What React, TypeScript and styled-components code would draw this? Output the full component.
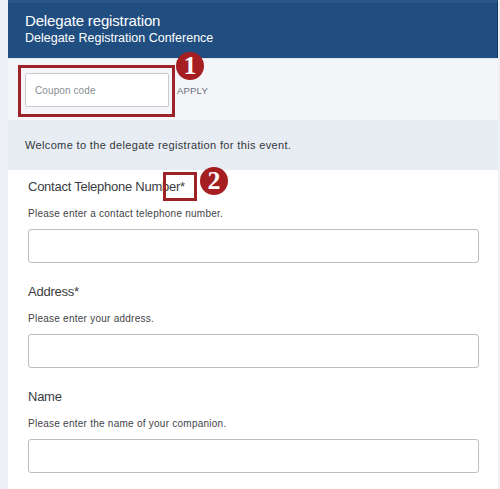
import styled, { createGlobalStyle } from "styled-components";

const GlobalStyle = createGlobalStyle`
  html, body {
    margin: 0;
    padding: 0;
    background: #eef0f5;
  }
  * {
    box-sizing: border-box;
  }
`;

const Page = styled.div`
  position: relative;
  width: 500px;
  height: 489px;
  overflow: hidden;
  padding-left: 8px;
  padding-right: 2px;
  font-family: "Liberation Sans", Arial, sans-serif;
`;

const Card = styled.div`
  background: #ffffff;
  height: 100%;
  display: flex;
  flex-direction: column;
`;

const Header = styled.header`
  height: 58px;
  background: #214e80;
  border-top: 3px solid #2b5788;
  border-right: 1px solid #183a60;
  color: #ffffff;
  padding: 8px 17px 0;
  display: flex;
  flex-direction: column;
`;

const Title = styled.h1`
  margin: 0;
  font-size: 15px;
  font-weight: 400;
  letter-spacing: -0.15px;
  line-height: 19px;
`;

const Subtitle = styled.div`
  font-size: 12.5px;
  line-height: 16px;
`;

const CouponBar = styled.div`
  height: 62px;
  background: #f4f5f9;
  border-top: 1px solid #dde3ec;
  padding: 14px 17px 0;
  display: flex;
  align-items: flex-start;
  gap: 8px;
`;

const CouponInput = styled.input`
  width: 144px;
  height: 34px;
  border: 1px solid #c9cbcf;
  border-radius: 2px;
  background: #ffffff;
  padding: 0 9px;
  font-family: inherit;
  font-size: 10px;
  letter-spacing: 0.1px;
  color: #333;

  &::placeholder {
    color: #8a8d92;
  }
`;

const ApplyButton = styled.button`
  border: none;
  background: transparent;
  padding: 0;
  height: 34px;
  font-family: inherit;
  font-size: 9.5px;
  letter-spacing: 0.2px;
  color: #6b7079;
  cursor: pointer;
`;

const WelcomeBand = styled.div`
  height: 50px;
  background: #e8ecf3;
  padding: 0 17px;
  display: flex;
  align-items: center;
  font-size: 11px;
  letter-spacing: 0.35px;
  color: #33373d;
`;

const Form = styled.form`
  padding: 7px 20px 0;
  display: flex;
  flex-direction: column;
  gap: 19px;
`;

const Field = styled.div`
  display: flex;
  flex-direction: column;
`;

const Label = styled.label`
  font-size: 13px;
  letter-spacing: -0.25px;
  line-height: 20px;
  color: #3a3d42;
`;

const Help = styled.div`
  margin-top: 9px;
  font-size: 10px;
  line-height: 16px;
  letter-spacing: 0.25px;
  color: #3f4348;
`;

const TextInput = styled.input`
  margin-top: 7px;
  width: 451px;
  height: 34px;
  border: 1px solid #bcbec2;
  border-radius: 3px;
  background: #ffffff;
  font-family: inherit;
  font-size: 13px;
  padding: 0 8px;
`;

const Marker = styled.div<{ $x: number; $y: number; $w: number; $h: number }>`
  position: absolute;
  left: ${(p) => p.$x}px;
  top: ${(p) => p.$y}px;
  width: ${(p) => p.$w}px;
  height: ${(p) => p.$h}px;
  border: 3px solid #9c2426;
  pointer-events: none;
`;

const Badge = styled.div<{ $x: number; $y: number }>`
  position: absolute;
  left: ${(p) => p.$x}px;
  top: ${(p) => p.$y}px;
  width: 28px;
  height: 28px;
  border-radius: 50%;
  background: #a51e22;
  color: #ffffff;
  font-family: "Liberation Serif", "Times New Roman", serif;
  font-weight: 700;
  font-size: 26px;
  line-height: 28px;
  text-align: center;
  pointer-events: none;
`;

const fields = [
  {
    id: "phone",
    label: "Contact Telephone Number*",
    help: "Please enter a contact telephone number.",
  },
  { id: "address", label: "Address*", help: "Please enter your address." },
  {
    id: "companion",
    label: "Name",
    help: "Please enter the name of your companion.",
  },
];

export default function App() {
  return (
    <>
      <GlobalStyle />
      <Page>
        <Card>
          <Header>
            <Title>Delegate registration</Title>
            <Subtitle>Delegate Registration Conference</Subtitle>
          </Header>

          <CouponBar>
            <CouponInput placeholder="Coupon code" />
            <ApplyButton type="button">APPLY</ApplyButton>
          </CouponBar>

          <WelcomeBand>Welcome to the delegate registration for this event.</WelcomeBand>

          <Form onSubmit={(e) => e.preventDefault()}>
            {fields.map((f) => (
              <Field key={f.id}>
                <Label htmlFor={f.id}>{f.label}</Label>
                <Help>{f.help}</Help>
                <TextInput id={f.id} />
              </Field>
            ))}
          </Form>
        </Card>

        <Marker $x={18} $y={65} $w={157} $h={52} />
        <Badge $x={176} $y={52}>1</Badge>
        <Marker $x={163} $y={172} $w={34} $h={29} />
        <Badge $x={200} $y={167}>2</Badge>
      </Page>
    </>
  );
}
